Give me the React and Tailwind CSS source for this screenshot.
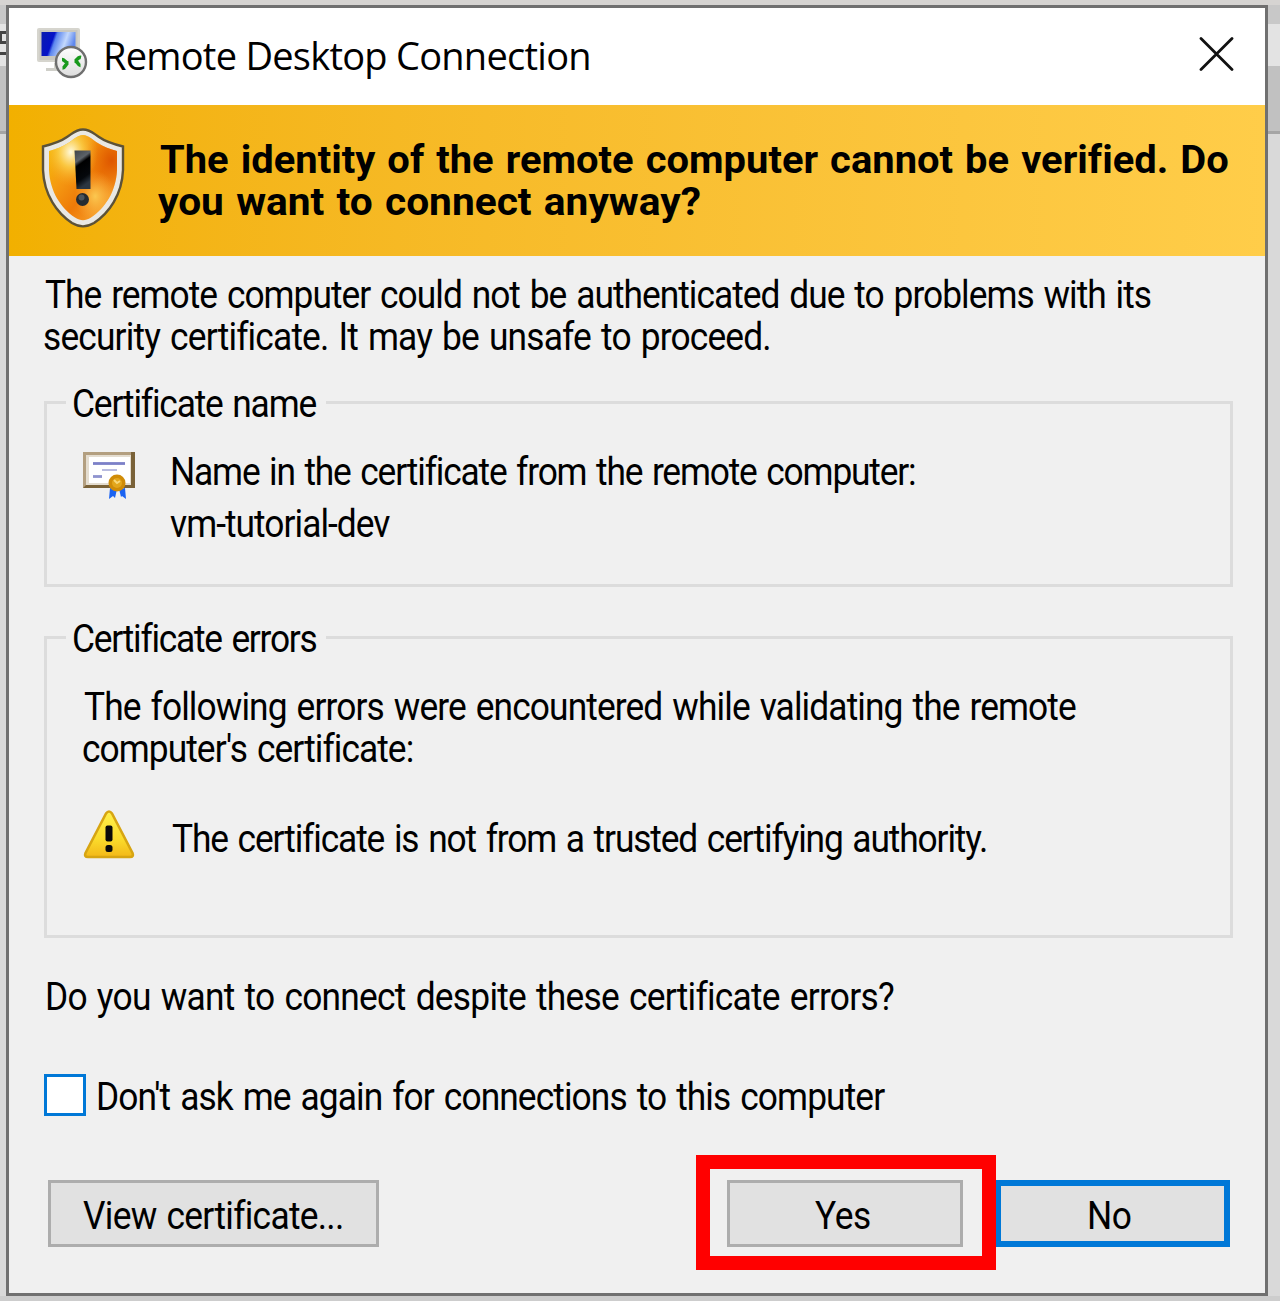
import React, { useState } from 'react';
import clsx from 'clsx';

// Single line of dialog text, slightly condensed
const Line = ({ children, className }) => (
    <div className={clsx('h-[42px] leading-[44px] text-[38px] whitespace-nowrap origin-left scale-x-[0.93] [word-spacing:2.2px]', className)}>
        {children}
    </div>
);

const RemoteIcon = () => (
    <svg className="w-[54px] h-[54px] shrink-0" viewBox="0 0 54 54">
        <defs>
            <linearGradient id="screen" x1="0" y1="0" x2="1" y2="0.25">
                <stop offset="0" stopColor="#0a1cae" />
                <stop offset="0.38" stopColor="#0412c8" />
                <stop offset="0.46" stopColor="#5c86ee" />
                <stop offset="0.75" stopColor="#c3d8fc" />
                <stop offset="1" stopColor="#6089ee" />
            </linearGradient>
            <linearGradient id="disc" x1="0" y1="0" x2="0" y2="1">
                <stop offset="0" stopColor="#ffffff" />
                <stop offset="1" stopColor="#dcdcdc" />
            </linearGradient>
        </defs>
        <path d="M17 36h12v6H17z" fill="#d4d4cd" />
        <path d="M9 41h20v3H9z" fill="#cfcfc9" />
        <rect x="0" y="1" width="43" height="34" rx="2" fill="#d6d5ce" />
        <rect x="2.500" y="3" width="38" height="30" fill="#c9c8c0" />
        <rect x="4.500" y="5" width="34" height="24" fill="url(#screen)" />
        <circle cx="34" cy="35" r="15" fill="url(#disc)" stroke="#6f6f6f" strokeWidth="2.400" />
        <path d="M25 32.500c3 0 3 3.500 6.500 3.500M25.500 41c3 0 3-5 6-5M44 30.500c-4-1-3 3.500-6.500 3.500M43.500 38.500c-3 0-2-4.500-6-4.500" fill="none" stroke="#18991c" strokeWidth="3.600" />
    </svg>
);

const ShieldIcon = () => (
    <svg className="w-[84px] h-[100px] shrink-0" viewBox="0 0 84 100">
        <defs>
            <linearGradient id="shieldFill" x1="0" y1="0" x2="1" y2="1">
                <stop offset="0" stopColor="#f6c400" />
                <stop offset="0.35" stopColor="#f59a12" />
                <stop offset="0.6" stopColor="#ee7a08" />
                <stop offset="1" stopColor="#fcb43c" />
            </linearGradient>
            <radialGradient id="shieldGlow" cx="0.32" cy="0.2" r="0.4">
                <stop offset="0" stopColor="#fffbe0" />
                <stop offset="0.45" stopColor="#fbd04c" stopOpacity="0.8" />
                <stop offset="1" stopColor="#f6a820" stopOpacity="0" />
            </radialGradient>
            <radialGradient id="shieldRed" cx="0.92" cy="0.3" r="0.4">
                <stop offset="0" stopColor="#de5600" />
                <stop offset="1" stopColor="#e86c00" stopOpacity="0" />
            </radialGradient>
            <radialGradient id="shieldLow" cx="0.68" cy="0.72" r="0.3">
                <stop offset="0" stopColor="#fbc850" />
                <stop offset="1" stopColor="#fbb040" stopOpacity="0" />
            </radialGradient>
            <linearGradient id="bang" x1="0" y1="0" x2="0.3" y2="1">
                <stop offset="0" stopColor="#3f4448" />
                <stop offset="0.3" stopColor="#5c6268" />
                <stop offset="0.42" stopColor="#000000" />
                <stop offset="0.8" stopColor="#05080c" />
                <stop offset="1" stopColor="#2c3640" />
            </linearGradient>
        </defs>
        <path d="M42 1.500C49 1.500 52 5 58 9C65 14 72 16 82 18.500V42C81 67 68 85 53 95C45 99.500 39 99.500 31 95C16 85 3 67 2 42V18.500C12 16 19 14 26 9C32 5 35 1.500 42 1.500Z" fill="#e9e8e4" stroke="#5c5238" strokeWidth="2.400" />
        {['url(#shieldFill)', 'url(#shieldRed)', 'url(#shieldLow)', 'url(#shieldGlow)'].map((fill) => (
            <path key={fill} d="M42 7C48 7.500 51 11 56 14.500C63 19 69 21 76 23V42C75 64 64 80 50 89.500C44 93 40 93 34 89.500C20 80 9 64 8 42V23C15 21 21 19 28 14.500C33 11 36 7.500 42 7Z" fill={fill} />
        ))}
        <path d="M33.500 22.500h16v38.500h-14z" fill="url(#bang)" />
        <circle cx="41.500" cy="71.500" r="6.500" fill="#252b31" />
        <circle cx="40.500" cy="69.500" r="3" fill="#4c555c" />
    </svg>
);

const CertificateIcon = () => (
    <svg className="w-[52px] h-[48px] shrink-0" viewBox="0 0 52 48">
        <rect width="52" height="36" fill="#b39f80" />
        <path d="M52 0v36H0l3-3h45V0z" fill="#7a6238" />
        <rect x="3" y="3" width="45" height="30" fill="#e4ddd0" />
        <rect x="6" y="5" width="41" height="26" fill="#ffffff" />
        <path d="M10 11.500h32" stroke="#7c80c8" strokeWidth="2.800" />
        <path d="M19 18h15" stroke="#b9bce0" strokeWidth="2" />
        <path d="M10 24.500h9" stroke="#8f93cf" strokeWidth="2.800" />
        <path d="M27 36l7 1-2 9-2-2-4 3zM36 37l6-1 1 11-4-3-1 1z" fill="#1a63f2" />
        <circle cx="34" cy="31" r="8.500" fill="#d08c08" />
        <circle cx="34" cy="31" r="5" fill="#e3a61c" />
        <path d="M31 28l3 3 3-2" fill="none" stroke="#f8d878" strokeWidth="2" />
    </svg>
);

const WarningIcon = () => (
    <svg className="w-[52px] h-[50px] shrink-0" viewBox="0 0 52 50">
        <defs>
            <linearGradient id="warn" x1="0" y1="0" x2="0" y2="1">
                <stop offset="0" stopColor="#fff04c" />
                <stop offset="0.6" stopColor="#fbdc2c" />
                <stop offset="1" stopColor="#f3b818" />
            </linearGradient>
        </defs>
        <path d="M23 3.500Q26 -0.500 29 3.500L49.500 43Q51 47 47 47H5Q1 47 2.500 43Z" fill="url(#warn)" stroke="#d7a512" strokeWidth="2.600" strokeLinejoin="round" />
        <rect x="22.500" y="15.500" width="7" height="16" rx="2" fill="#0a0a0a" />
        <rect x="22.500" y="35" width="7" height="7" rx="2.500" fill="#0a0a0a" />
    </svg>
);

// Slivers of the window behind the dialog
const Backdrop = ({ children, className }) => (
    <div className={clsx('shrink-0 flex flex-col', className)}>
        <div className="h-[19px] bg-[#c8c8c8]" />
        <div className="h-[42px] bg-[#e3e3e3]">{children}</div>
        <div className="h-[65px] bg-[#c1c1c1]" />
        <div className="h-[3px] bg-[#a5a5a5]" />
        <div className="flex-1 bg-[#d9d9d9]" />
    </div>
);

const App = () => {
    const [dontAsk, setDontAsk] = useState(false);

    return (
        <div className="w-[1280px] h-[1301px] flex flex-col overflow-hidden bg-[#cdcdcd] text-black font-[Roboto,sans-serif]">
            <div className="h-[5px] shrink-0 bg-[#d6d4d2]" />
            <div className="flex h-[1291px] shrink-0">
                <Backdrop className="w-[6px]">
                    <div className="pt-[7px]">
                        <div className="h-[13px] border-y-3 border-l-2 border-[#444]" />
                        <div className="mt-[8px] h-[3px] bg-[#444]" />
                    </div>
                </Backdrop>

                <div className="w-[1262px] shrink-0 flex flex-col border-3 border-[#707070] bg-[#f0f0f0]">
                    {/* Title bar */}
                    <div className="h-[97px] shrink-0 bg-white flex items-center pl-[28px] pr-[31px] pb-[5px]">
                        <RemoteIcon />
                        <h1 className="ml-[12px] h-[42px] font-['Open_Sans',sans-serif] text-[38px] leading-[44px] tracking-[-0.74px] whitespace-nowrap">
                            Remote Desktop Connection
                        </h1>
                        <button className="ml-auto">
                            <svg className="w-[35px] h-[35px]" viewBox="0 0 35 35">
                                <path d="M2 1.500l31 31M33 1.500L2 32.500" stroke="#111" strokeWidth="2.800" strokeLinecap="round" />
                            </svg>
                        </button>
                    </div>

                    {/* Warning banner */}
                    <div className="h-[151px] shrink-0 flex items-center pl-[32px] pb-[5px] bg-linear-to-r from-[#f2b000] to-[#ffcd49]">
                        <ShieldIcon />
                        <div className="ml-[35px] font-bold text-[38px] leading-[42px] whitespace-nowrap pt-[6px]">
                            <div className="origin-left scale-x-[1.05] tracking-[0.01px] [word-spacing:2px]">The identity of the remote computer cannot be verified. Do</div>
                            <div className="origin-left scale-x-[1.07] [word-spacing:2px] -ml-[2px]">you want to connect anyway?</div>
                        </div>
                    </div>

                    <div className="flex-1 flex flex-col px-[35px] pt-[17px]">
                        <Line className="tracking-[-1.06px] ml-px">The remote computer could not be authenticated due to problems with its</Line>
                        <Line className="tracking-[-0.9px] -ml-px">security certificate. It may be unsafe to proceed.</Line>

                        <fieldset className="mt-[24px] w-[1189px] h-[206px] shrink-0 border-3 border-[#dcdcdc] pl-[19px]">
                            <legend className="w-[260px] h-[42px] pl-[6px]">
                                <Line className="tracking-[-1.27px] pt-px">Certificate name</Line>
                            </legend>
                            <div className="flex pl-[17px] pt-[27px]">
                                <div className="pt-[2px]"><CertificateIcon /></div>
                                <div className="ml-[35px]">
                                    <Line className="tracking-[-1.27px]">Name in the certificate from the remote computer:</Line>
                                    <Line className="tracking-[-1.04px] mt-[10px]">vm-tutorial-dev</Line>
                                </div>
                            </div>
                        </fieldset>

                        <fieldset className="mt-[29px] w-[1189px] h-[322px] shrink-0 border-3 border-[#dcdcdc] pl-[19px]">
                            <legend className="w-[260px] h-[42px] pl-[6px]">
                                <Line className="tracking-[-1.35px] pt-px">Certificate errors</Line>
                            </legend>
                            <div className="pl-[16px] pt-[27px]">
                                <Line className="tracking-[-0.97px] ml-[2px]">The following errors were encountered while validating the remote</Line>
                                <Line className="tracking-[-1.02px]">computer's certificate:</Line>
                            </div>
                            <div className="flex pl-[17px] mt-[41px]">
                                <WarningIcon />
                                <Line className="tracking-[-1.22px] ml-[37px] mt-[7px]">The certificate is not from a trusted certifying authority.</Line>
                            </div>
                        </fieldset>

                        <Line className="tracking-[-0.82px] mt-[37px] ml-px">Do you want to connect despite these certificate errors?</Line>

                        <label className="flex mt-[57px]">
                            <input
                                type="checkbox"
                                checked={dontAsk}
                                onChange={(e) => setDontAsk(e.target.checked)}
                                className="appearance-none w-[42px] h-[42px] border-3 border-[#0078d7] bg-white checked:bg-[#0078d7]"
                            />
                            <Line className="tracking-[-0.98px] ml-[10px] pt-px">Don't ask me again for connections to this computer</Line>
                        </label>

                        {/* Actions */}
                        <div className="flex mt-[64px] ml-[4px]">
                            <button className="w-[331px] h-[67px] border-3 border-[#adadad] bg-[#e1e1e1] flex items-center pl-[32px] pt-[3px]">
                                <Line className="tracking-[-0.78px]">View certificate...</Line>
                            </button>
                            <div className="relative ml-[348px]">
                                <button className="w-[236px] h-[67px] border-3 border-[#adadad] bg-[#e1e1e1] flex justify-center items-center pt-[3px]">
                                    <Line className="tracking-[-0.4px] origin-center">Yes</Line>
                                </button>
                                <div className="absolute z-10 -left-[31px] -top-[25px] w-[300px] h-[115px] border-14 border-[#ff0000] pointer-events-none" />
                            </div>
                            <button className="ml-[32px] w-[235px] h-[67px] border-6 border-[#0078d7] bg-[#e1e1e1] flex justify-center items-center pt-[3px] pr-[3px]">
                                <Line className="tracking-[-0.5px] origin-center">No</Line>
                            </button>
                        </div>
                    </div>
                </div>

                <Backdrop className="w-[12px]" />
            </div>
        </div>
    );
};

export default App;
